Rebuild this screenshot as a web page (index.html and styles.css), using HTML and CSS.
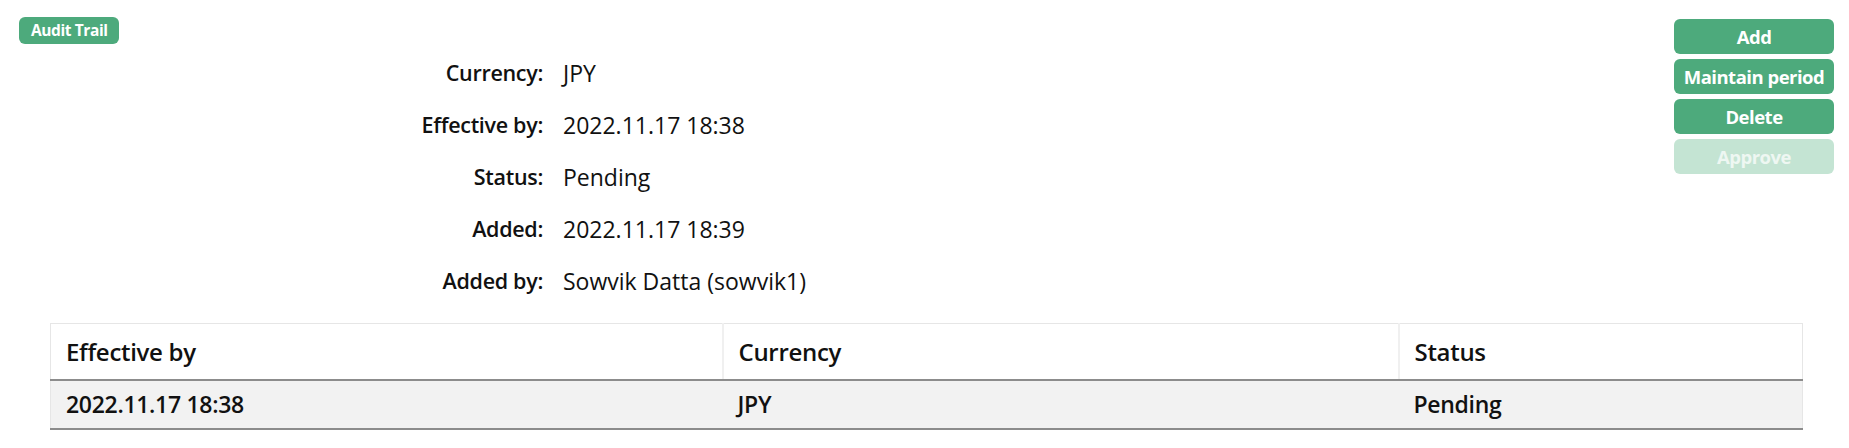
FILE: index.html
```html
<!DOCTYPE html>
<html lang="en">
<head>
<meta charset="utf-8">
<title>Currency</title>
<link rel="stylesheet" href="styles.css">
</head>
<body>
<div class="page">
  <div class="top">
    <div class="main">
      <span class="badge">Audit Trail</span>
      <dl class="info">
        <dt>Currency:</dt><dd>JPY</dd>
        <dt>Effective by:</dt><dd>2022.11.17 18:38</dd>
        <dt>Status:</dt><dd>Pending</dd>
        <dt>Added:</dt><dd>2022.11.17 18:39</dd>
        <dt>Added by:</dt><dd>Sowvik Datta (sowvik1)</dd>
      </dl>
    </div>
    <div class="actions">
      <button class="btn">Add</button>
      <button class="btn">Maintain period</button>
      <button class="btn">Delete</button>
      <button class="btn btn-disabled" disabled>Approve</button>
    </div>
  </div>
  <table class="grid">
    <colgroup>
      <col class="c1"><col class="c2"><col class="c3">
    </colgroup>
    <thead>
      <tr><th>Effective by</th><th>Currency</th><th>Status</th></tr>
    </thead>
    <tbody>
      <tr><td>2022.11.17 18:38</td><td>JPY</td><td>Pending</td></tr>
    </tbody>
  </table>
</div>
</body>
</html>
```
FILE: styles.css
```css
* { box-sizing: border-box; }
html, body { margin: 0; padding: 0; background: #fff; }
body {
  font-family: "Open Sans", "Noto Sans", sans-serif;
  color: #111;
}
.page { padding: 17px 15px 0 19px; }
.top { display: flex; justify-content: space-between; align-items: flex-start; }
.main { display: flex; flex-direction: column; align-items: flex-start; }
.badge {
  display: inline-block;
  background: #4daa7c;
  color: #fff;
  font-weight: 700;
  font-size: 15.5px;
  line-height: 27px;
  height: 27px;
  padding: 0 11px 0 12px;
  border-radius: 6px;
  letter-spacing: -0.4px;
}
.info {
  display: grid;
  grid-template-columns: 524px auto;
  column-gap: 20px;
  margin: 3px 0 0 0;
}
.info dt, .info dd {
  margin: 0;
  height: 52px;
  line-height: 52px;
}
.info dt { text-align: right; font-weight: 600; letter-spacing: -0.3px; font-size: 21.5px; }
.info dd { font-weight: 400; font-size: 23px; }
.actions {
  display: flex;
  flex-direction: column;
  gap: 5px;
  margin-top: 2px;
  width: 160px;
}
.btn {
  height: 35px;
  border: 0;
  border-radius: 6px;
  background: #4daa7c;
  color: #fff;
  font-family: inherit;
  font-weight: 700;
  font-size: 18.5px;
  letter-spacing: -0.5px;
  padding: 0;
}
.btn-disabled { background: #c4e4d3; color: #eef7f2; }
.grid {
  margin: 16px 31px 0 31px;
  width: calc(100% - 62px);
  border-collapse: collapse;
  border: 1px solid #e6e6e6;
  table-layout: fixed;
}
.c1 { width: 672px; }
.c2 { width: 676px; }
.c3 { width: auto; }
.grid th, .grid td {
  text-align: left;
  padding: 0 15px;
  font-weight: 600;
  letter-spacing: -0.3px;
}
.grid th {
  height: 56px;
  font-size: 24px;
  border-bottom: 2px solid #8c8c8c;
}
.grid th + th { border-left: 2px solid #f0f0f0; }
.grid td {
  height: 49px;
  font-size: 23px;
  background: #f2f2f2;
  border-bottom: 2px solid #8c8c8c;
}
```
